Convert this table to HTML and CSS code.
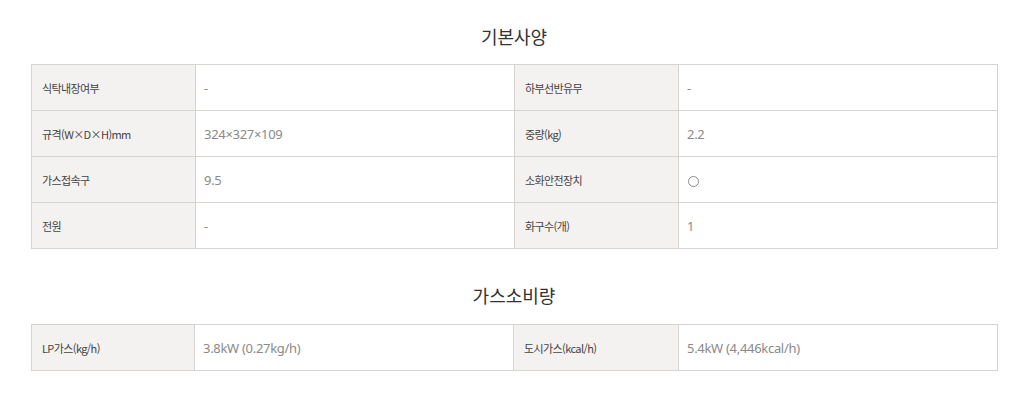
FILE: index.html
```html
<!DOCTYPE html>
<html lang="ko">
<head>
<meta charset="utf-8">
<title>기본사양</title>
<link rel="stylesheet" href="styles.css">
</head>
<body>
<div class="wrap">
  <section class="spec">
    <h2 class="spec-title">기본사양</h2>
    <table class="spec-table">
      <colgroup>
        <col class="c-label"><col class="c-value"><col class="c-label"><col class="c-value">
      </colgroup>
      <tbody>
        <tr>
          <th>식탁내장여부</th><td>-</td>
          <th>하부선반유무</th><td>-</td>
        </tr>
        <tr>
          <th>규격(W×D×H)mm</th><td>324×327×109</td>
          <th>중량(kg)</th><td>2.2</td>
        </tr>
        <tr>
          <th>가스접속구</th><td>9.5</td>
          <th>소화안전장치</th><td><span class="circle"></span></td>
        </tr>
        <tr>
          <th>전원</th><td>-</td>
          <th>화구수(개)</th><td>1</td>
        </tr>
      </tbody>
    </table>
  </section>
  <section class="spec spec-second">
    <h2 class="spec-title">가스소비량</h2>
    <table class="spec-table">
      <colgroup>
        <col class="c-label2a"><col class="c-value"><col class="c-label2b"><col class="c-value">
      </colgroup>
      <tbody>
        <tr>
          <th>LP가스(kg/h)</th><td>3.8kW (0.27kg/h)</td>
          <th>도시가스(kcal/h)</th><td>5.4kW (4,446kcal/h)</td>
        </tr>
      </tbody>
    </table>
  </section>
</div>
</body>
</html>
```

FILE: styles.css
```css
html, body {
  margin: 0;
  padding: 0;
  background: #ffffff;
}

body {
  font-family: "Noto Sans CJK KR", "Noto Sans", sans-serif;
  color: #333333;
}

.wrap {
  width: 966px;
  margin-left: 31px;
  padding-top: 22px;
}

.spec-title {
  margin: 0 0 14px;
  font-size: 18px;
  line-height: 28px;
  font-weight: 400;
  text-align: center;
  color: #333333;
}

.spec-second {
  margin-top: 32px;
}

.spec-second .spec-title {
  margin-bottom: 15px;
}

.spec-table {
  width: 100%;
  border-collapse: collapse;
  table-layout: fixed;
  border: 1px solid #d6d3d0;
}

.c-label { width: 164px; }
.c-value { width: 319px; }
.c-label2a { width: 163px; }
.c-label2b { width: 165px; }

.spec-table th,
.spec-table td {
  height: 45px;
  padding: 0;
  border: 1px solid #d6d3d0;
  vertical-align: middle;
  text-align: left;
}

.spec-table th {
  background: #f4f2f0;
  font-weight: 400;
  font-size: 11px;
  color: #444444;
  padding-left: 10px;
  letter-spacing: -0.6px;
}

.spec-table td {
  background: #ffffff;
  font-family: "Noto Sans", "Noto Sans CJK KR", sans-serif;
  font-size: 13px;
  color: #8a8a8a;
  padding-left: 8px;
  letter-spacing: -0.3px;
}

.circle {
  display: inline-block;
  width: 9px;
  height: 9px;
  border: 1px solid #8a8a8a;
  border-radius: 50%;
  vertical-align: middle;
  margin-left: 1px;
}
```
